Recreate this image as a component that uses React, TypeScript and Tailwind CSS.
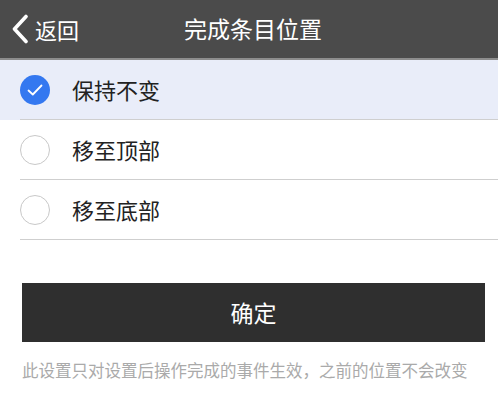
import React, { useState } from 'react'

const options = ['保持不变', '移至顶部', '移至底部']

const App: React.FC = () => {
  const [selected, setSelected] = useState(0)

  return (
    <div className="w-[498px] h-[404px] bg-white overflow-hidden font-['Noto_Sans_CJK_SC',sans-serif]">
      {/* Header */}
      <div className="relative h-[60px] bg-[#4b4b4b] border-b-2 border-[#8d8d8d] flex items-center justify-center">
        <div className="absolute left-[11px] top-0 h-full flex items-center text-white">
          <svg width="18" height="30" viewBox="0 0 18 30" fill="none">
            <path d="M15 2.5 L3.5 15 L15 27.5" stroke="white" strokeWidth="3.6" strokeLinecap="round" strokeLinejoin="round" />
          </svg>
          <span className="ml-[6px] text-[22px] leading-none -mt-px">返回</span>
        </div>
        <span className="text-white text-[23px] leading-none ml-[8px] -mt-px">完成条目位置</span>
      </div>

      {/* Options */}
      <div>
        {options.map((label, i) => (
          <div
            key={label}
            onClick={() => setSelected(i)}
            className={`h-[60px] flex items-center relative ${i === selected ? 'bg-[#e9edf9]' : 'bg-white'}`}
          >
            <div className="w-[72px] flex items-center pl-[20px]">
              {i === selected ? (
                <div className="w-[30px] h-[30px] rounded-full bg-[#3478f0] flex items-center justify-center">
                  <svg width="16" height="12" viewBox="0 0 16 12" fill="none">
                    <path d="M1.5 6.5 L5.8 10.5 L14.5 1.5" stroke="white" strokeWidth="1.8" strokeLinecap="round" strokeLinejoin="round" />
                  </svg>
                </div>
              ) : (
                <div className="w-[30px] h-[30px] rounded-full border border-[#c8c8c8] bg-white" />
              )}
            </div>
            <span className="text-[22px] text-[#222] leading-none -mt-[3px]">{label}</span>
            <div className="absolute left-[20px] right-0 bottom-0 h-px bg-[#cfcfcf]" />
          </div>
        ))}
      </div>

      {/* Confirm */}
      <div className="px-[22px] pt-[43px]">
        <button className="w-[463px] h-[59px] bg-[#2f2f2f] text-white text-[23px] flex items-center justify-center">
          确定
        </button>
        <p className="mt-[20px] text-[16.5px] text-[#aaaaaa] leading-none whitespace-nowrap">
          此设置只对设置后操作完成的事件生效，之前的位置不会改变
        </p>
      </div>
    </div>
  )
}

export default App
